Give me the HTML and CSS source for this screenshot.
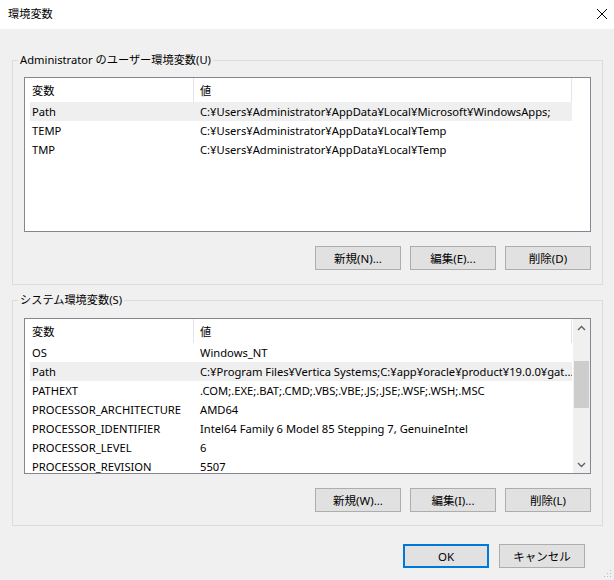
FILE: index.html
```html
<!DOCTYPE html>
<html lang="ja">
<head>
    <meta charset="UTF-8">
    <title>環境変数</title>
    <link rel="stylesheet" href="styles.css">
</head>
<body>
    <div class="window">
        <!-- Title bar -->
        <div class="titlebar">
            <span class="title">環境変数</span>
            <svg class="close" width="12" height="12" viewBox="0 0 12 12">
                <path d="M1 1 L11 11 M11 1 L1 11" stroke="#000" stroke-width="1" fill="none"/>
            </svg>
        </div>

        <div class="client">
            <!-- User variables -->
            <fieldset class="group group-user">
                <legend>Administrator のユーザー環境変数(U)</legend>
                <div class="list list-user">
                    <div class="list-view">
                        <div class="list-head">
                            <div class="head-name">変数</div>
                            <div class="head-value">値</div>
                        </div>
                        <div class="row selected"><div class="cell-name">Path</div><div class="cell-value">C:¥Users¥Administrator¥AppData¥Local¥Microsoft¥WindowsApps;</div></div>
                        <div class="row"><div class="cell-name">TEMP</div><div class="cell-value">C:¥Users¥Administrator¥AppData¥Local¥Temp</div></div>
                        <div class="row"><div class="cell-name">TMP</div><div class="cell-value">C:¥Users¥Administrator¥AppData¥Local¥Temp</div></div>
                    </div>
                </div>
                <div class="button-row">
                    <button class="btn">新規(N)...</button>
                    <button class="btn">編集(E)...</button>
                    <button class="btn">削除(D)</button>
                </div>
            </fieldset>

            <!-- System variables -->
            <fieldset class="group group-system">
                <legend>システム環境変数(S)</legend>
                <div class="list list-system">
                    <div class="list-view">
                        <div class="list-head">
                            <div class="head-name">変数</div>
                            <div class="head-value">値</div>
                        </div>
                        <div class="row"><div class="cell-name">OS</div><div class="cell-value">Windows_NT</div></div>
                        <div class="row selected"><div class="cell-name">Path</div><div class="cell-value">C:¥Program Files¥Vertica Systems;C:¥app¥oracle¥product¥19.0.0¥gat...</div></div>
                        <div class="row"><div class="cell-name">PATHEXT</div><div class="cell-value">.COM;.EXE;.BAT;.CMD;.VBS;.VBE;.JS;.JSE;.WSF;.WSH;.MSC</div></div>
                        <div class="row"><div class="cell-name">PROCESSOR_ARCHITECTURE</div><div class="cell-value">AMD64</div></div>
                        <div class="row"><div class="cell-name">PROCESSOR_IDENTIFIER</div><div class="cell-value">Intel64 Family 6 Model 85 Stepping 7, GenuineIntel</div></div>
                        <div class="row"><div class="cell-name">PROCESSOR_LEVEL</div><div class="cell-value">6</div></div>
                        <div class="row"><div class="cell-name">PROCESSOR_REVISION</div><div class="cell-value">5507</div></div>
                    </div>
                    <div class="scrollbar">
                        <div class="scroll-arrow">
                            <svg width="9" height="6" viewBox="0 0 9 6"><polyline points="1,5 4.5,1.5 8,5" stroke="#606060" stroke-width="1.4" fill="none"/></svg>
                        </div>
                        <div class="scroll-track"><div class="scroll-thumb"></div></div>
                        <div class="scroll-arrow">
                            <svg width="9" height="6" viewBox="0 0 9 6"><polyline points="1,1 4.5,4.5 8,1" stroke="#606060" stroke-width="1.4" fill="none"/></svg>
                        </div>
                    </div>
                </div>
                <div class="button-row">
                    <button class="btn">新規(W)...</button>
                    <button class="btn">編集(I)...</button>
                    <button class="btn">削除(L)</button>
                </div>
            </fieldset>

            <div class="dialog-buttons">
                <button class="btn btn-default">OK</button>
                <button class="btn">キャンセル</button>
            </div>
        </div>

        <svg class="grip" width="10" height="10" viewBox="0 0 10 10">
            <rect x="8" y="2" width="1" height="1" fill="#bcbcbc"/>
            <rect x="5" y="5" width="1" height="1" fill="#bcbcbc"/>
            <rect x="8" y="5" width="1" height="1" fill="#bcbcbc"/>
            <rect x="2" y="8" width="1" height="1" fill="#bcbcbc"/>
            <rect x="5" y="8" width="1" height="1" fill="#bcbcbc"/>
            <rect x="8" y="8" width="1" height="1" fill="#bcbcbc"/>
        </svg>
    </div>
</body>
</html>
```

FILE: styles.css
```css
body {
  margin: 0;
  padding: 0;
  font-family: "Noto Sans", "Noto Sans CJK JP", sans-serif;
  font-size: 11.2px;
  color: #000;
  background-color: #f0f0f0;
}

.window {
  position: relative;
  width: 614px;
  height: 580px;
  overflow: hidden;
  background-color: #f0f0f0;
}

/* Title bar */
.titlebar {
  height: 29px;
  background-color: #fff;
  display: flex;
  align-items: center;
  justify-content: space-between;
  padding: 0 8px;
  box-sizing: border-box;
}

.title {
  line-height: 16px;
  margin-top: -1px;
}

.close {
  margin-right: -2px;
  margin-top: -1px;
}

/* Client area */
.client {
  padding: 23px 11px 0 12px;
}

.group {
  margin: 0;
  min-width: 0;
  border: 1px solid #dcdcdc;
  padding: 9px 11px 14px 11px;
}

.group legend {
  margin-left: -6px;
  padding: 0 2px;
  line-height: 16px;
}

.group-system {
  margin-top: 7px;
  padding-top: 10px;
  padding-bottom: 13px;
}

/* List views */
.list {
  display: flex;
  border: 1px solid #828790;
  background-color: #fff;
  overflow: hidden;
}

.list-user {
  height: 155px;
  box-sizing: border-box;
}

.list-system {
  height: 156px;
  box-sizing: border-box;
}

.list-view {
  flex: 1;
  overflow: hidden;
}

.list-head {
  display: flex;
  height: 24px;
  line-height: 25px;
  width: 547px;
}

.head-name {
  width: 161px;
  padding-left: 7px;
  border-right: 1px solid #e5e5e5;
}

.head-value {
  flex: 1;
  padding-left: 6px;
  border-right: 1px solid #e5e5e5;
}

.row {
  display: flex;
  height: 19px;
  line-height: 20px;
  margin-left: 5px;
  width: 542px;
  white-space: nowrap;
}

.row.selected {
  background-color: #efefef;
}

.cell-name {
  width: 161px;
  padding-left: 2px;
  overflow: hidden;
}

.cell-value {
  flex: 1;
  padding-left: 7px;
  overflow: hidden;
}

/* Scrollbar */
.scrollbar {
  width: 17px;
  display: flex;
  flex-direction: column;
  background-color: #f0f0f0;
}

.scroll-arrow {
  height: 17px;
  display: flex;
  align-items: center;
  justify-content: center;
}

.scroll-track {
  flex: 1;
}

.scroll-thumb {
  margin: 25px 1px 0 1px;
  height: 47px;
  background-color: #cdcdcd;
}

/* Buttons */
.button-row {
  display: flex;
  justify-content: flex-end;
  gap: 9px;
  margin-top: 14px;
}

.btn {
  width: 86px;
  height: 24px;
  padding: 0;
  font-family: inherit;
  font-size: 11.5px;
  color: #000;
  background-color: #e1e1e1;
  border: 1px solid #adadad;
  border-radius: 0;
}

.btn-default {
  border: 2px solid #0078d7;
}

.dialog-buttons {
  display: flex;
  justify-content: flex-end;
  gap: 10px;
  margin-top: 18px;
  padding-right: 18px;
}

.grip {
  position: absolute;
  right: 2px;
  bottom: 2px;
}
```
